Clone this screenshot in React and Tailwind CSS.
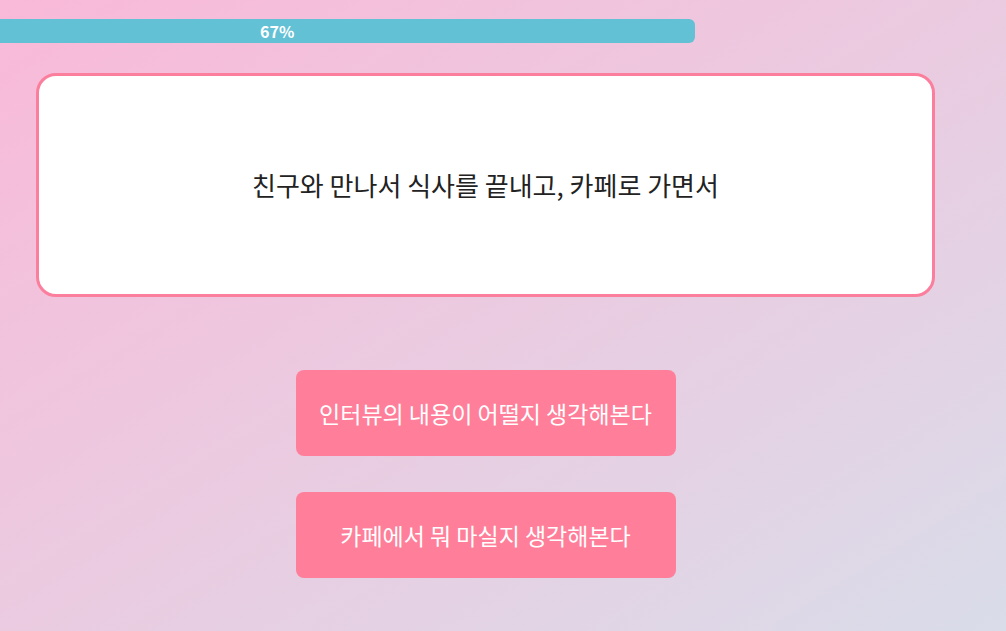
const choices = [
  '인터뷰의 내용이 어떨지 생각해본다',
  '카페에서 뭐 마실지 생각해본다',
];

const ProgressBar = ({ percent }) => (
  <div className="pt-[19px]">
    <div className="flex h-6 w-[695px] items-center rounded-r-md bg-[#63c1d5] pl-[260px]">
      <span className="text-[16px] font-semibold text-white">{percent}%</span>
    </div>
  </div>
);

export default function App() {
  return (
    <div
      className="min-h-[631px] bg-gradient-to-br from-[#f9b9d8] to-[#d9dce9]"
      style={{ fontFamily: '"Noto Sans CJK KR", "Noto Sans", sans-serif' }}
    >
      <ProgressBar percent={67} />

      <div className="ml-[36px] w-[899px]">
        <div className="mt-[30px] flex h-[224px] items-center justify-center rounded-[20px] border-[3px] border-[#fb7e9c] bg-white">
          <p className="text-[26px] leading-none text-[#222]">친구와 만나서 식사를 끝내고, 카페로 가면서</p>
        </div>

        <div className="mt-[73px] flex flex-col items-center gap-[36px]">
          {choices.map((text) => (
            <button
              key={text}
              className="flex h-[86px] w-[380px] items-center justify-center rounded-lg bg-[#ff7f9a] text-[23px] leading-none text-white"
            >
              {text}
            </button>
          ))}
        </div>
      </div>
    </div>
  );
}
